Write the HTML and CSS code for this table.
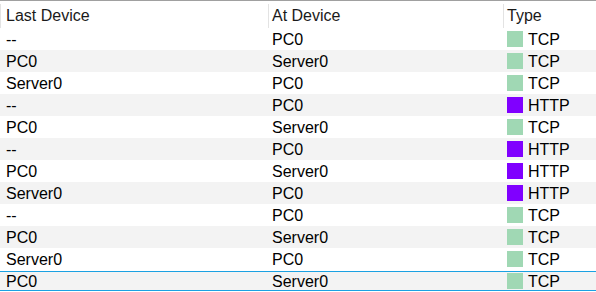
FILE: index.html
```html
<!DOCTYPE html>
<html>
<head>
<meta charset="utf-8">
<link rel="stylesheet" href="styles.css">
</head>
<body>
<div class="table">
  <div class="header">
    <div class="hcell c1">Last Device</div>
    <div class="hcell c2">At Device</div>
    <div class="hcell c3">Type</div>
  </div>
  <div class="row"><div class="cell c1">--</div><div class="cell c2">PC0</div><div class="cell c3"><span class="sw tcp"></span>TCP</div></div>
  <div class="row alt"><div class="cell c1">PC0</div><div class="cell c2">Server0</div><div class="cell c3"><span class="sw tcp"></span>TCP</div></div>
  <div class="row"><div class="cell c1">Server0</div><div class="cell c2">PC0</div><div class="cell c3"><span class="sw tcp"></span>TCP</div></div>
  <div class="row alt"><div class="cell c1">--</div><div class="cell c2">PC0</div><div class="cell c3"><span class="sw http"></span>HTTP</div></div>
  <div class="row"><div class="cell c1">PC0</div><div class="cell c2">Server0</div><div class="cell c3"><span class="sw tcp"></span>TCP</div></div>
  <div class="row alt"><div class="cell c1">--</div><div class="cell c2">PC0</div><div class="cell c3"><span class="sw http"></span>HTTP</div></div>
  <div class="row"><div class="cell c1">PC0</div><div class="cell c2">Server0</div><div class="cell c3"><span class="sw http"></span>HTTP</div></div>
  <div class="row alt"><div class="cell c1">Server0</div><div class="cell c2">PC0</div><div class="cell c3"><span class="sw http"></span>HTTP</div></div>
  <div class="row"><div class="cell c1">--</div><div class="cell c2">PC0</div><div class="cell c3"><span class="sw tcp"></span>TCP</div></div>
  <div class="row alt"><div class="cell c1">PC0</div><div class="cell c2">Server0</div><div class="cell c3"><span class="sw tcp"></span>TCP</div></div>
  <div class="row"><div class="cell c1">Server0</div><div class="cell c2">PC0</div><div class="cell c3"><span class="sw tcp"></span>TCP</div></div>
  <div class="row selected"><div class="cell c1">PC0</div><div class="cell c2">Server0</div><div class="cell c3"><span class="sw tcp"></span>TCP</div></div>
</div>
</body>
</html>
```
FILE: styles.css
```css
html, body {
  margin: 0;
  padding: 0;
  background: #ffffff;
}
body {
  width: 596px;
  height: 292px;
  overflow: hidden;
  font-family: "Liberation Sans", Arial, sans-serif;
  font-size: 16px;
  color: #000000;
}
.table {
  display: flex;
  flex-direction: column;
}
.header {
  display: grid;
  grid-template-columns: 268px 235px 1fr;
  height: 27px;
  border-top: 1px solid #a0a0a0;
  background: #ffffff;
}
.hcell {
  display: flex;
  align-items: center;
  padding-top: 2px;
  color: #1a1a1a;
  background: linear-gradient(to right, #e3e3e3 1px, transparent 1px) no-repeat 0 3px / 100% 24px;
}
.row {
  display: grid;
  grid-template-columns: 268px 235px 1fr;
  height: 22px;
  background: #ffffff;
}
.row.alt {
  background: #f3f3f3;
}
.row.selected {
  background: linear-gradient(to bottom,
    #ffffff 0, #ffffff 1px,
    #1ba1e2 1px, #1ba1e2 2px,
    #f3f3f3 2px, #f3f3f3 20px,
    #1ba1e2 20px, #1ba1e2 21px,
    #ffffff 21px);
}
.cell {
  display: flex;
  align-items: center;
  padding-top: 1px;
  white-space: nowrap;
}
.c1 { padding-left: 6px; }
.c2 { padding-left: 4px; }
.c3 { padding-left: 4px; }
.sw {
  display: inline-block;
  width: 16px;
  height: 16px;
  margin-right: 5px;
  margin-top: 2px;
  align-self: flex-start;
  flex: none;
}
.sw.tcp { background: #a0d8b4; }
.sw.http { background: #8000ff; }
```
